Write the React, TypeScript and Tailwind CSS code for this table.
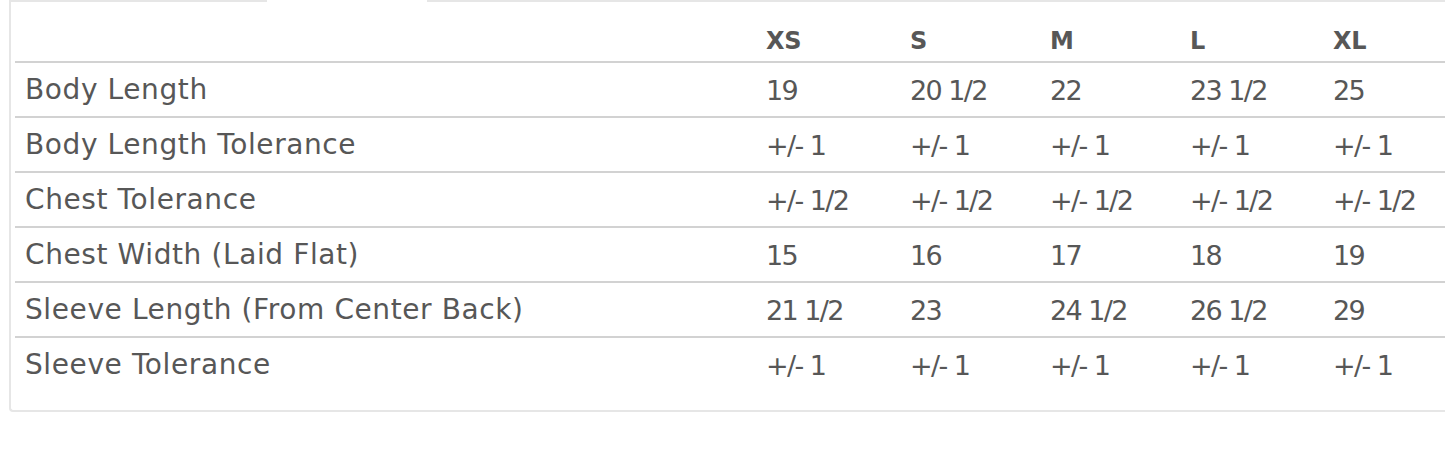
import React from "react";

const sizes = ["XS", "S", "M", "L", "XL"];
const rows: [string, string[]][] = [
  ["Body Length", ["19", "20 1/2", "22", "23 1/2", "25"]],
  ["Body Length Tolerance", ["+/- 1", "+/- 1", "+/- 1", "+/- 1", "+/- 1"]],
  ["Chest Tolerance", ["+/- 1/2", "+/- 1/2", "+/- 1/2", "+/- 1/2", "+/- 1/2"]],
  ["Chest Width (Laid Flat)", ["15", "16", "17", "18", "19"]],
  ["Sleeve Length (From Center Back)", ["21 1/2", "23", "24 1/2", "26 1/2", "29"]],
  ["Sleeve Tolerance", ["+/- 1", "+/- 1", "+/- 1", "+/- 1", "+/- 1"]],
];

const grid = "grid grid-cols-[741px_144px_140px_140px_143px_160px]";

export default function App() {
  return (
    <div className="w-[1445px] h-[457px] overflow-hidden bg-white pl-[9px] text-[#575757] font-['DejaVu_Sans',sans-serif]">
      <div className="w-[1600px] rounded-b-[4px] border-l-2 border-b-2 border-[#e6e6e6] pb-[17px]">
        <div className="flex">
          <div className="w-[256px] border-t-2 border-[#e6e6e6]" />
          <div className="w-[160px]" />
          <div className="flex-1 border-t-2 border-[#e6e6e6]" />
        </div>
        <div className="pl-[4px] pt-[5px]">
          <div className={`${grid} h-[56px] items-start border-b-2 border-[#d2d2d2] font-bold text-[24px] tracking-[-0.3px] leading-none pt-[22px]`}>
            <div />
            {sizes.map((s) => (
              <div key={s} className="pl-[10px]">{s}</div>
            ))}
            <div />
          </div>
          {rows.map(([label, vals], i) => (
            <div
              key={label}
              className={`${grid} h-[55px] items-start text-[28px] leading-none pt-[13px] ${i < rows.length - 1 ? "border-b-2 border-[#d2d2d2]" : ""}`}
            >
              <div className="pl-[10px] tracking-[0.6px]">{label}</div>
              {vals.map((v, j) => (
                <div key={j} className="pl-[10px] text-[27px] pt-[1px] tracking-[-1.6px]">{v}</div>
              ))}
              <div />
            </div>
          ))}
        </div>
      </div>
    </div>
  );
}
